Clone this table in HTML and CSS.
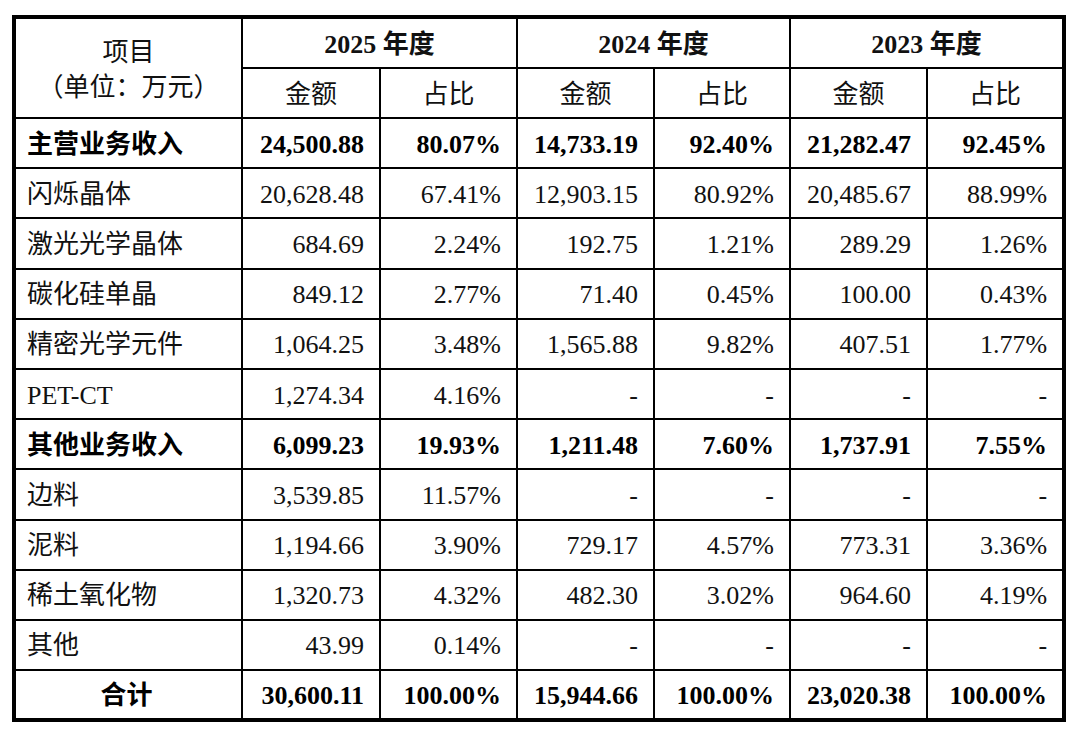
FILE: index.html
```html
<!DOCTYPE html>
<html lang="zh-CN">
<head>
<meta charset="utf-8">
<title>收入构成</title>
<link rel="stylesheet" href="styles.css">
</head>
<body>
<table class="rev">
  <colgroup>
    <col class="c-name">
    <col class="c-num c-a"><col class="c-num c-b">
    <col class="c-num c-c"><col class="c-num c-d">
    <col class="c-num c-b"><col class="c-num c-b">
  </colgroup>
  <thead>
    <tr class="h1">
      <th rowspan="2" class="item"><div>项目</div><div>（单位：万元）</div></th>
      <th colspan="2" class="year">2025 年度</th>
      <th colspan="2" class="year">2024 年度</th>
      <th colspan="2" class="year">2023 年度</th>
    </tr>
    <tr class="h2">
      <th>金额</th><th>占比</th>
      <th>金额</th><th>占比</th>
      <th>金额</th><th>占比</th>
    </tr>
  </thead>
  <tbody>
    <tr class="bold"><td class="name">主营业务收入</td><td>24,500.88</td><td>80.07%</td><td>14,733.19</td><td>92.40%</td><td>21,282.47</td><td>92.45%</td></tr>
    <tr><td class="name">闪烁晶体</td><td>20,628.48</td><td>67.41%</td><td>12,903.15</td><td>80.92%</td><td>20,485.67</td><td>88.99%</td></tr>
    <tr><td class="name">激光光学晶体</td><td>684.69</td><td>2.24%</td><td>192.75</td><td>1.21%</td><td>289.29</td><td>1.26%</td></tr>
    <tr><td class="name">碳化硅单晶</td><td>849.12</td><td>2.77%</td><td>71.40</td><td>0.45%</td><td>100.00</td><td>0.43%</td></tr>
    <tr><td class="name">精密光学元件</td><td>1,064.25</td><td>3.48%</td><td>1,565.88</td><td>9.82%</td><td>407.51</td><td>1.77%</td></tr>
    <tr><td class="name">PET-CT</td><td>1,274.34</td><td>4.16%</td><td>-</td><td>-</td><td>-</td><td>-</td></tr>
    <tr class="bold"><td class="name">其他业务收入</td><td>6,099.23</td><td>19.93%</td><td>1,211.48</td><td>7.60%</td><td>1,737.91</td><td>7.55%</td></tr>
    <tr><td class="name">边料</td><td>3,539.85</td><td>11.57%</td><td>-</td><td>-</td><td>-</td><td>-</td></tr>
    <tr><td class="name">泥料</td><td>1,194.66</td><td>3.90%</td><td>729.17</td><td>4.57%</td><td>773.31</td><td>3.36%</td></tr>
    <tr><td class="name">稀土氧化物</td><td>1,320.73</td><td>4.32%</td><td>482.30</td><td>3.02%</td><td>964.60</td><td>4.19%</td></tr>
    <tr><td class="name">其他</td><td>43.99</td><td>0.14%</td><td>-</td><td>-</td><td>-</td><td>-</td></tr>
    <tr class="bold total"><td class="name">合计</td><td>30,600.11</td><td>100.00%</td><td>15,944.66</td><td>100.00%</td><td>23,020.38</td><td>100.00%</td></tr>
  </tbody>
</table>
</body>
</html>
```

FILE: styles.css
```css
html, body {
  margin: 0;
  padding: 0;
  background: #fff;
}
body {
  padding: 15px 0 0 12px;
  font-family: "Liberation Serif", "Noto Sans CJK SC", serif;
  color: #111;
}
.rev {
  border-collapse: collapse;
  table-layout: fixed;
  width: 1054px;
  border: 4px solid #000;
  font-size: 26px;
}
.c-name { width: 228px; }
.c-a { width: 138px; }
.c-b { width: 137px; }
.c-c { width: 137px; }
.c-d { width: 136px; }
.rev th, .rev td {
  border: 2px solid #000;
  padding: 3px 15px 0 11px;
  line-height: 30px;
  white-space: nowrap;
  vertical-align: middle;
}
.rev th {
  text-align: center;
  font-weight: normal;
  padding: 3px 0 0 0;
}
.rev td { text-align: right; }
.rev td.name { text-align: left; }
.h1 { height: 51px; }
.h2 { height: 50px; }
.rev tbody tr { height: 50.2px; }
.year { font-weight: bold !important; }
.item { line-height: 35px !important; }
.item div { line-height: 35px; }
.bold td { font-weight: bold; color: #000; }
.total td.name { text-align: center; }
```
